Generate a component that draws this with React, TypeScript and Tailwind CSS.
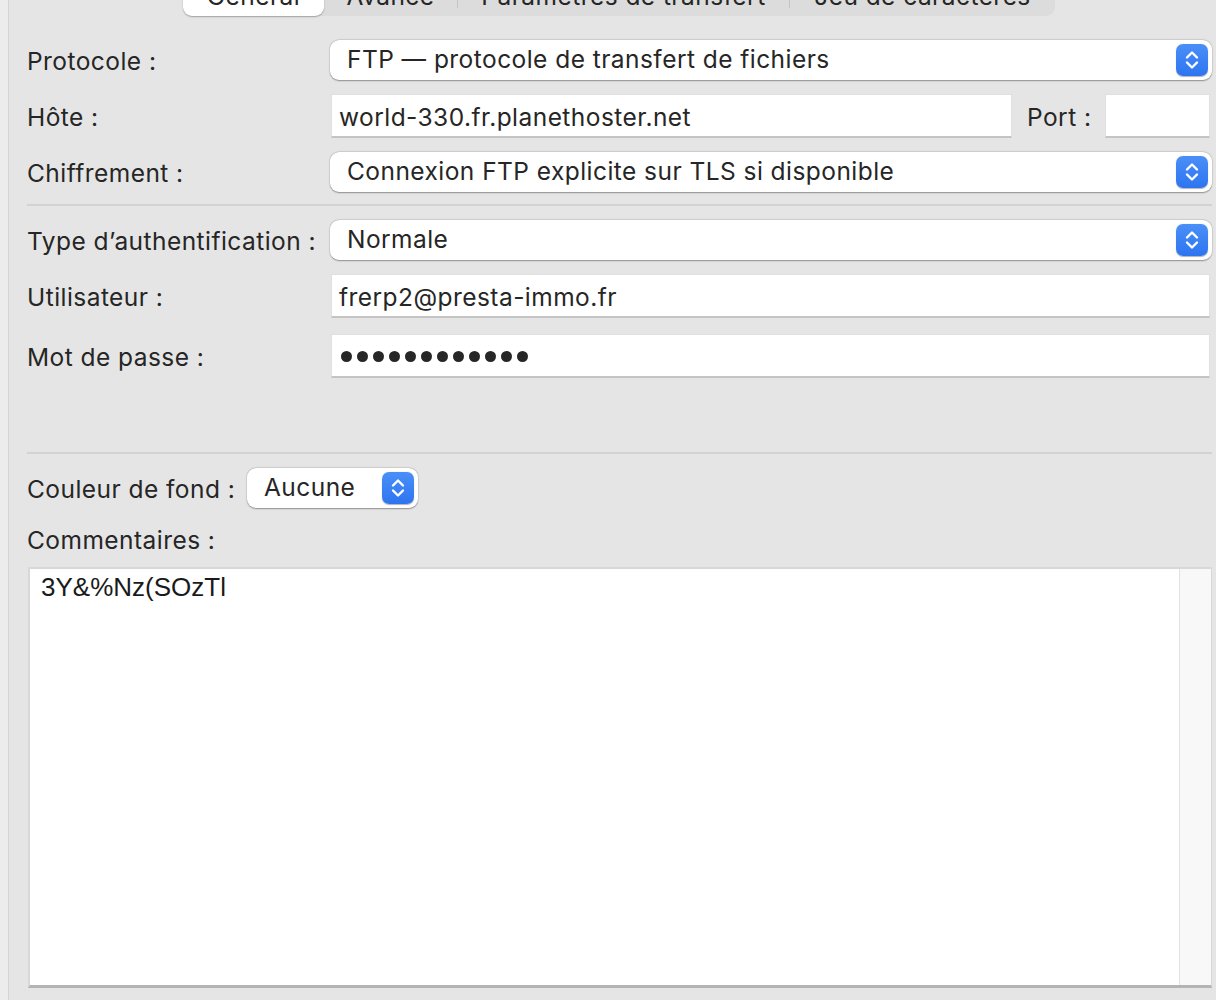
import React from 'react';

const font = { fontFamily: 'Inter, "Liberation Sans", sans-serif' };

function Stepper() {
  return (
    <span className="flex h-[32px] w-[32px] items-center justify-center rounded-[7px] bg-gradient-to-b from-[#4a8ff8] to-[#2e74f0] shadow-[0_0.5px_1px_rgba(0,0,0,0.3)]">
      <svg width="16" height="24" viewBox="0 0 16 24" fill="none" stroke="white" strokeWidth="2.4" strokeLinecap="round" strokeLinejoin="round">
        <path d="M3 9.5 L8 4.5 L13 9.5" />
        <path d="M3 14.5 L8 19.5 L13 14.5" />
      </svg>
    </span>
  );
}

function Select({ value, className = '' }: { value: string; className?: string }) {
  return (
    <div className={`flex h-[40px] items-center justify-between rounded-[9px] bg-white pl-[17px] pr-[4px] shadow-[0_0.5px_1.5px_rgba(0,0,0,0.35),0_0_0_0.5px_rgba(0,0,0,0.08)] ${className}`}>
      <span className="pb-[2px] text-[24.5px] tracking-[0.45px] text-[#262626]">{value}</span>
      <Stepper />
    </div>
  );
}

function Input({ value, className = '' }: { value?: string; className?: string }) {
  return (
    <div className={`flex h-[44px] items-center border-t border-l border-r border-[#e0e0e0] border-b-2 border-b-[#c4c4c4] bg-white pl-[7px] pt-[3px] text-[24.5px] tracking-[0.45px] text-[#262626] ${className}`}>
      {value}
    </div>
  );
}

function Label({ children, w = 'w-[303px]' }: { children: React.ReactNode; w?: string }) {
  return <div className={`${w} shrink-0 pt-[2px] text-[24.5px] tracking-[0.45px] text-[#262626]`}>{children}</div>;
}

export default function App() {
  const tabs = ['Général', 'Avancé', 'Paramètres de transfert', 'Jeu de caractères'];
  return (
    <div className="flex h-[1000px] w-[1216px] overflow-hidden bg-[#e5e5e5]" style={font}>
      <div className="w-[9px] shrink-0 border-r border-[#d4d4d4] bg-[#ececec]" />
      <div className="flex flex-1 flex-col pl-[18px] pr-[4px]">
        <div className="-mt-[24px] ml-[156px] flex h-[40px] w-[872px] items-center rounded-[9px] bg-[#dcdcdc] text-[24.5px] tracking-[0.45px] text-[#262626]">
          <div className="flex h-full w-[141px] items-center justify-center rounded-[9px] bg-white shadow-[0_0.5px_1.5px_rgba(0,0,0,0.3)]">{tabs[0]}</div>
          <div className="flex w-[133px] justify-center">{tabs[1]}</div>
          <div className="h-[24px] w-px bg-[#c4c4c4]" />
          <div className="flex w-[331px] justify-center">{tabs[2]}</div>
          <div className="h-[24px] w-px bg-[#c4c4c4]" />
          <div className="flex flex-1 justify-center">{tabs[3]}</div>
        </div>

        <div className="mt-[24px] flex h-[40px] items-center">
          <Label>Protocole :</Label>
          <Select value="FTP — protocole de transfert de fichiers" className="flex-1" />
        </div>
        <div className="mt-[14px] flex h-[44px] items-center pr-[2px]">
          <Label w="w-[304px]">Hôte :</Label>
          <Input value="world-330.fr.planethoster.net" className="flex-1" />
          <div className="ml-[15px] w-[78px] shrink-0 pt-[2px] text-[24.5px] tracking-[0.45px] text-[#262626]">Port :</div>
          <Input className="w-[105px]" />
        </div>
        <div className="mt-[14px] flex h-[40px] items-center">
          <Label>Chiffrement :</Label>
          <Select value="Connexion FTP explicite sur TLS si disponible" className="flex-1" />
        </div>

        <div className="mt-[12px] h-[2px] bg-[#d2d2d2]" />

        <div className="mt-[14px] flex h-[40px] items-center">
          <Label>Type d’authentification :</Label>
          <Select value="Normale" className="flex-1" />
        </div>
        <div className="mt-[14px] flex h-[44px] items-center pr-[2px]">
          <Label w="w-[304px]">Utilisateur :</Label>
          <Input value="frerp2@presta-immo.fr" className="flex-1" />
        </div>
        <div className="mt-[16px] flex h-[44px] items-center pr-[2px]">
          <Label w="w-[304px]">Mot de passe :</Label>
          <div className="flex h-[44px] flex-1 items-center gap-[5px] border-t border-l border-r border-[#e0e0e0] border-b-2 border-b-[#c4c4c4] bg-white pl-[9px] pt-[2px]">
            {Array.from({ length: 12 }).map((_, i) => (
              <span key={i} className="h-[11px] w-[11px] rounded-full bg-[#262626]" />
            ))}
          </div>
        </div>

        <div className="mt-[74px] h-[2px] bg-[#d2d2d2]" />

        <div className="mt-[14px] flex h-[40px] items-center">
          <Label w="w-[220px]">Couleur de fond :</Label>
          <Select value="Aucune" className="w-[171px]" />
        </div>
        <div className="mt-[16px] flex h-[30px] items-center">
          <Label>Commentaires :</Label>
        </div>
        <div className="mt-[13px] ml-[1px] flex h-[421px] border-t-2 border-l-2 border-r border-[#d8d8d8] border-b-[3px] border-b-[#b4b4b4] bg-white">
          <div className="flex-1 pl-[11px] pt-[3px] text-[26px] leading-[30px] text-[#1a1a1a]" style={{ fontFamily: '"Liberation Sans", Arial, sans-serif' }}>
            3Y&amp;%Nz(SOzTl
          </div>
          <div className="w-[32px] border-l border-[#e2e2e2] bg-[#f8f8f8]" />
        </div>
      </div>
    </div>
  );
}
